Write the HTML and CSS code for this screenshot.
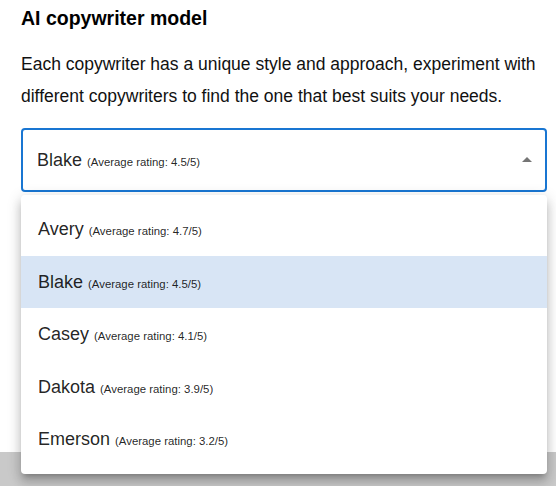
FILE: index.html
```html
<!DOCTYPE html>
<html lang="en">

<head>
    <meta charset="UTF-8">
    <title>AI copywriter model</title>
    <link rel="stylesheet" href="styles.css">
</head>

<body>
    <div class="page">
        <h2 class="title">AI copywriter model</h2>
        <p class="desc">Each copywriter has a unique style and approach, experiment with different copywriters to find the one that best suits your needs.</p>

        <div class="field">
            <div class="select">
                <span class="name">Blake</span>
                <span class="rating">(Average rating: 4.5/5)</span>
                <svg class="arrow" viewBox="0 0 24 24" width="24" height="24"><path d="m7 14 5-5 5 5z"/></svg>
            </div>

            <ul class="menu">
                <li class="item"><span class="name">Avery</span><span class="rating">(Average rating: 4.7/5)</span></li>
                <li class="item selected"><span class="name">Blake</span><span class="rating">(Average rating: 4.5/5)</span></li>
                <li class="item"><span class="name">Casey</span><span class="rating">(Average rating: 4.1/5)</span></li>
                <li class="item"><span class="name">Dakota</span><span class="rating">(Average rating: 3.9/5)</span></li>
                <li class="item"><span class="name">Emerson</span><span class="rating">(Average rating: 3.2/5)</span></li>
            </ul>
        </div>
    </div>
    <div class="backdrop"></div>
</body>

</html>
```

FILE: styles.css
```css
html,
body {
    margin: 0;
    background: #ffffff;
}

body {
    font-family: 'Liberation Sans', Arial, sans-serif;
    color: rgba(0, 0, 0, 0.87);
}

.page {
    position: relative;
    z-index: 1;
    height: 452px;
    background: #ffffff;
    padding: 0 9px 0 21px;
    box-sizing: border-box;
}

.backdrop {
    height: 34px;
    background: #c9c9c9;
}

.title {
    margin: 0;
    padding-top: 7px;
    font-size: 19.5px;
    line-height: 22px;
    font-weight: bold;
    color: #000;
}

.desc {
    margin: 19px 0 0;
    font-size: 17.5px;
    line-height: 32px;
    color: #111;
}

.field {
    position: relative;
    margin-top: 16px;
}

.select {
    display: flex;
    align-items: baseline;
    height: 64px;
    padding: 0 6px 0 14px;
    border: 2px solid #1976d2;
    border-radius: 4px;
    box-sizing: border-box;
    line-height: 60px;
}

.name {
    font-size: 18px;
}

.rating {
    font-size: 11.4px;
    margin-left: 5px;
}

.arrow {
    align-self: center;
    margin-left: auto;
    fill: rgba(0, 0, 0, 0.54);
}

.menu {
    position: absolute;
    top: 67px;
    left: 0;
    right: 0;
    margin: 0;
    padding: 8px 0;
    list-style: none;
    background: #ffffff;
    border-radius: 4px;
    box-shadow: 0 5px 5px -3px rgba(0, 0, 0, 0.2), 0 8px 10px 1px rgba(0, 0, 0, 0.14), 0 3px 14px 2px rgba(0, 0, 0, 0.12);
}

.item {
    display: flex;
    align-items: baseline;
    height: 52.5px;
    padding: 0 17px;
    line-height: 52.5px;
}

.item.selected {
    background: #d8e5f5;
}
```
